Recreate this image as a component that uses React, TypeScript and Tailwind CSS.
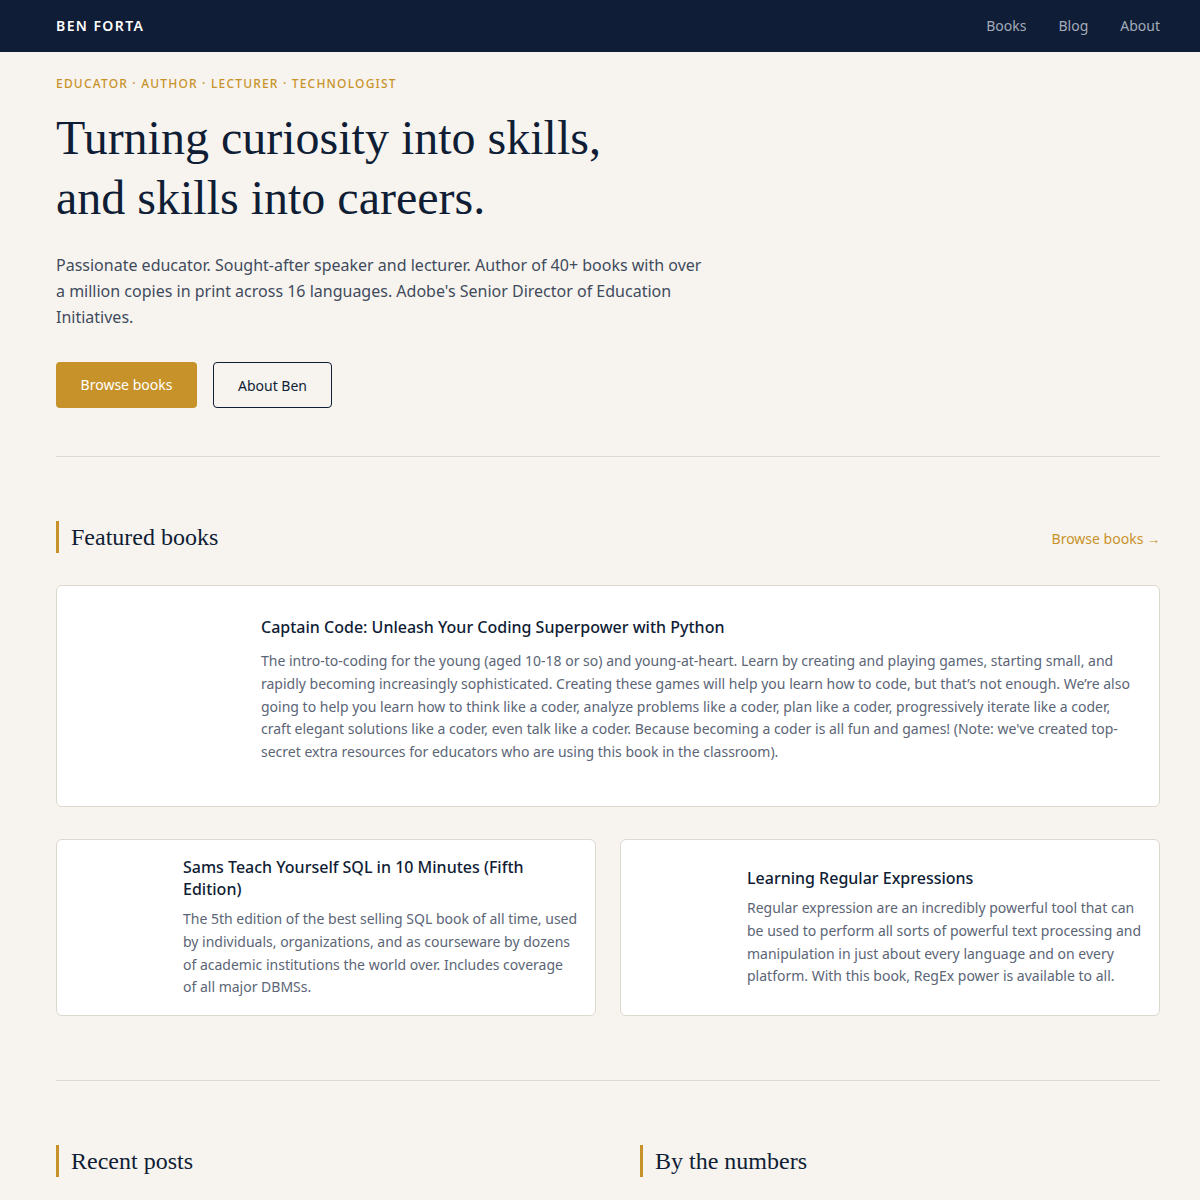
const books = [
  {
    title: "Sams Teach Yourself SQL in 10 Minutes (Fifth Edition)",
    text: "The 5th edition of the best selling SQL book of all time, used by individuals, organizations, and as courseware by dozens of academic institutions the world over. Includes coverage of all major DBMSs.",
  },
  {
    title: "Learning Regular Expressions",
    text: "Regular expression are an incredibly powerful tool that can be used to perform all sorts of powerful text processing and manipulation in just about every language and on every platform. With this book, RegEx power is available to all.",
  },
];

function SectionTitle({ children }: { children: React.ReactNode }) {
  return (
    <h2 className="border-l-[3px] border-[#c8922a] pl-3 font-['Liberation_Serif',serif] text-[24px] leading-8 text-[#0f1d35]">
      {children}
    </h2>
  );
}

export default function App() {
  return (
    <div className="min-h-screen bg-[#f7f4ef] font-['Noto_Sans',sans-serif] text-[#0f1d35]">
      <header className="bg-[#0f1d36]">
        <div className="flex h-[52px] items-center justify-between pb-0.5 pl-14 pr-10">
          <span className="text-[14px] font-semibold tracking-widest text-white">
            BEN FORTA
          </span>
          <nav className="flex gap-8 text-[14px] text-[#a3abb9]">
            <a href="#">Books</a>
            <a href="#">Blog</a>
            <a href="#">About</a>
          </nav>
        </div>
      </header>

      <main className="pl-14 pr-10">
        <section className="border-b border-[#ddd8cf] pt-6 pb-12">
          <p className="text-[12px] leading-4 font-medium tracking-widest text-[#c8922a]">
            EDUCATOR · AUTHOR · LECTURER · TECHNOLOGIST
          </p>
          <h1 className="mt-4 font-['Liberation_Serif',serif] text-[48px] leading-[60px] text-[#0f1d35]">
            Turning curiosity into skills,
            <br />
            and skills into careers.
          </h1>
          <p className="mt-6 max-w-[650px] text-[16px] leading-[26px] text-[#3f4b5d]">
            Passionate educator. Sought-after speaker and lecturer. Author of
            40+ books with over a million copies in print across 16 languages.
            Adobe's Senior Director of Education Initiatives.
          </p>
          <div className="mt-8 flex gap-4">
            <a
              href="#"
              className="flex h-[46px] w-[141px] items-center justify-center rounded bg-[#c8922a] pb-0.5 text-[14px] text-white"
            >
              Browse books
            </a>
            <a
              href="#"
              className="flex h-[46px] w-[119px] items-center justify-center rounded border border-[#0f1d35] text-[14px] text-[#0f1d35]"
            >
              About Ben
            </a>
          </div>
        </section>

        <section className="border-b border-[#ddd8cf] pt-16 pb-16">
          <div className="flex items-center justify-between">
            <SectionTitle>Featured books</SectionTitle>
            <a href="#" className="mt-1 text-[14px] text-[#c8922a]">
              Browse books <span className="text-[13px]">→</span>
            </a>
          </div>

          <div className="mt-8 flex min-h-[222px] items-center gap-5 rounded-md border border-[#ddd8cf] bg-white p-4">
            <div className="h-[150px] w-[168px] shrink-0" />
            <div className="pb-3">
              <h3 className="text-[16px] leading-[22px] font-medium text-[#0f1d35]">
                Captain Code: Unleash Your Coding Superpower with Python
              </h3>
              <p className="mt-3 text-[14px] leading-[22.75px] text-[#5b6576]">
                The intro-to-coding for the young (aged 10-18 or so) and
                young-at-heart. Learn by creating and playing games, starting
                small, and rapidly becoming increasingly sophisticated. Creating
                these games will help you learn how to code, but that’s not
                enough. We’re also going to help you learn how to think like a
                coder, analyze problems like a coder, plan like a coder,
                progressively iterate like a coder, craft elegant solutions like
                a coder, even talk like a coder. Because becoming a coder is all
                fun and games! (Note: we've created top-secret extra resources
                for educators who are using this book in the classroom).
              </p>
            </div>
          </div>

          <div className="mt-8 grid grid-cols-2 gap-6">
            {books.map((b) => (
              <div
                key={b.title}
                className="flex items-center gap-5 rounded-md border border-[#ddd8cf] bg-white p-4"
              >
                <div className="h-[100px] w-[90px] shrink-0" />
                <div>
                  <h3 className="text-[16px] leading-[22px] font-medium text-[#0f1d35]">
                    {b.title}
                  </h3>
                  <p className="mt-2 text-[14px] leading-[22.75px] text-[#5b6576]">
                    {b.text}
                  </p>
                </div>
              </div>
            ))}
          </div>
        </section>

        <section className="grid grid-cols-2 gap-16 pt-16 pb-16">
          <div>
            <SectionTitle>Recent posts</SectionTitle>
          </div>
          <div>
            <SectionTitle>By the numbers</SectionTitle>
          </div>
        </section>
      </main>
    </div>
  );
}
